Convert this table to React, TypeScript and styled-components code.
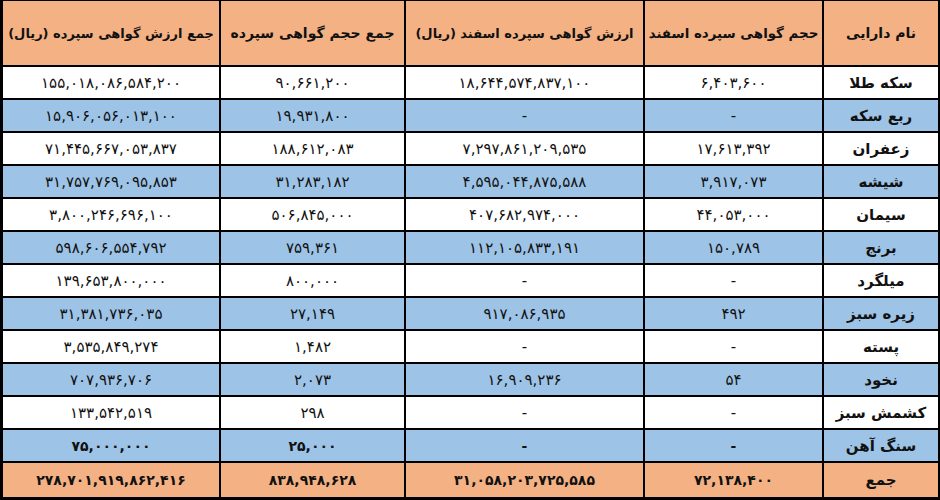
import React from "react";
import styled, { createGlobalStyle } from "styled-components";

const Global = createGlobalStyle`
  html, body { margin: 0; padding: 0; background: #ffffff; }
  body { font-family: "DejaVu Sans", "Noto Sans", sans-serif; }
`;

type Tone = "head" | "white" | "blue" | "total";

const toneColor: Record<Tone, string> = {
  head: "#f4b184",
  white: "#ffffff",
  blue: "#9dc3e6",
  total: "#f4b184",
};

const Grid = styled.div`
  direction: rtl;
  width: 940px;
  height: 500px;
  box-sizing: border-box;
  display: grid;
  grid-template-columns: 114px 177px 237px 183px 216px;
  grid-template-rows: 64px repeat(12, 31px) 34px;
  gap: 2px;
  padding: 1px 2px 3px 3px;
  background: #000000;
`;

const Cell = styled.div<{ $tone: Tone; $bold?: boolean }>`
  background: ${(p) => toneColor[p.$tone]};
  display: flex;
  align-items: center;
  justify-content: center;
  overflow: hidden;
  white-space: nowrap;
  color: #111111;
  font-size: ${(p) => (p.$bold ? 14 : 15)}px;
  font-weight: ${(p) => (p.$bold ? 700 : 400)};
`;

const HeadCell = styled.div<{ $size: number }>`
  background: ${toneColor.head};
  display: flex;
  align-items: center;
  justify-content: center;
  white-space: nowrap;
  overflow: hidden;
  color: #111111;
  font-size: ${(p) => p.$size}px;
  font-weight: 700;
`;

const NameCell = styled(Cell)`
  font-size: 15px;
  font-weight: 700;
`;

const Num = styled.span`
  direction: ltr;
  unicode-bidi: isolate;
`;

const headers: { text: string; size: number }[] = [
  { text: "نام دارایی", size: 14 },
  { text: "حجم گواهی سپرده اسفند", size: 13.4 },
  { text: "ارزش گواهی سپرده اسفند (ریال)", size: 13 },
  { text: "جمع حجم گواهی سپرده", size: 14 },
  { text: "جمع ارزش گواهی سپرده (ریال)", size: 13 },
];

type Row = { name: string; v: [string, string, string, string]; bold?: boolean };

const rows: Row[] = [
  { name: "سکه طلا", v: ["۶,۴۰۳,۶۰۰", "۱۸,۶۴۴,۵۷۴,۸۳۷,۱۰۰", "۹۰,۶۶۱,۲۰۰", "۱۵۵,۰۱۸,۰۸۶,۵۸۴,۲۰۰"] },
  { name: "ربع سکه", v: ["-", "-", "۱۹,۹۳۱,۸۰۰", "۱۵,۹۰۶,۰۵۶,۰۱۳,۱۰۰"] },
  { name: "زعفران", v: ["۱۷,۶۱۳,۳۹۲", "۷,۲۹۷,۸۶۱,۲۰۹,۵۳۵", "۱۸۸,۶۱۲,۰۸۳", "۷۱,۴۴۵,۶۶۷,۰۵۳,۸۳۷"] },
  { name: "شیشه", v: ["۳,۹۱۷,۰۷۳", "۴,۵۹۵,۰۴۴,۸۷۵,۵۸۸", "۳۱,۲۸۳,۱۸۲", "۳۱,۷۵۷,۷۶۹,۰۹۵,۸۵۳"] },
  { name: "سیمان", v: ["۴۴,۰۵۳,۰۰۰", "۴۰۷,۶۸۲,۹۷۴,۰۰۰", "۵۰۶,۸۴۵,۰۰۰", "۳,۸۰۰,۲۴۶,۶۹۶,۱۰۰"] },
  { name: "برنج", v: ["۱۵۰,۷۸۹", "۱۱۲,۱۰۵,۸۳۳,۱۹۱", "۷۵۹,۳۶۱", "۵۹۸,۶۰۶,۵۵۴,۷۹۲"] },
  { name: "میلگرد", v: ["-", "-", "۸۰۰,۰۰۰", "۱۳۹,۶۵۳,۸۰۰,۰۰۰"] },
  { name: "زیره سبز", v: ["۴۹۲", "۹۱۷,۰۸۶,۹۳۵", "۲۷,۱۴۹", "۳۱,۳۸۱,۷۳۶,۰۳۵"] },
  { name: "پسته", v: ["-", "-", "۱,۴۸۲", "۳,۵۳۵,۸۴۹,۲۷۴"] },
  { name: "نخود", v: ["۵۴", "۱۶,۹۰۹,۲۳۶", "۲,۰۷۳", "۷۰۷,۹۳۶,۷۰۶"] },
  { name: "کشمش سبز", v: ["-", "-", "۲۹۸", "۱۳۳,۵۴۲,۵۱۹"] },
  { name: "سنگ آهن", v: ["-", "-", "۲۵,۰۰۰", "۷۵,۰۰۰,۰۰۰"], bold: true },
];

const total: Row = {
  name: "جمع",
  v: ["۷۲,۱۳۸,۴۰۰", "۳۱,۰۵۸,۲۰۳,۷۲۵,۵۸۵", "۸۳۸,۹۴۸,۶۲۸", "۲۷۸,۷۰۱,۹۱۹,۸۶۲,۴۱۶"],
  bold: true,
};

export default function App() {
  return (
    <>
      <Global />
      <Grid>
        {headers.map((h) => (
          <HeadCell key={h.text} $size={h.size}>
            {h.text}
          </HeadCell>
        ))}
        {rows.map((r, i) => {
          const tone: Tone = i % 2 === 0 ? "white" : "blue";
          return (
            <React.Fragment key={r.name}>
              <NameCell $tone={tone}>{r.name}</NameCell>
              {r.v.map((val, j) => (
                <Cell key={j} $tone={tone} $bold={r.bold}>
                  <Num>{val}</Num>
                </Cell>
              ))}
            </React.Fragment>
          );
        })}
        <NameCell $tone="total">{total.name}</NameCell>
        {total.v.map((val, j) => (
          <Cell key={j} $tone="total" $bold>
            <Num>{val}</Num>
          </Cell>
        ))}
      </Grid>
    </>
  );
}
